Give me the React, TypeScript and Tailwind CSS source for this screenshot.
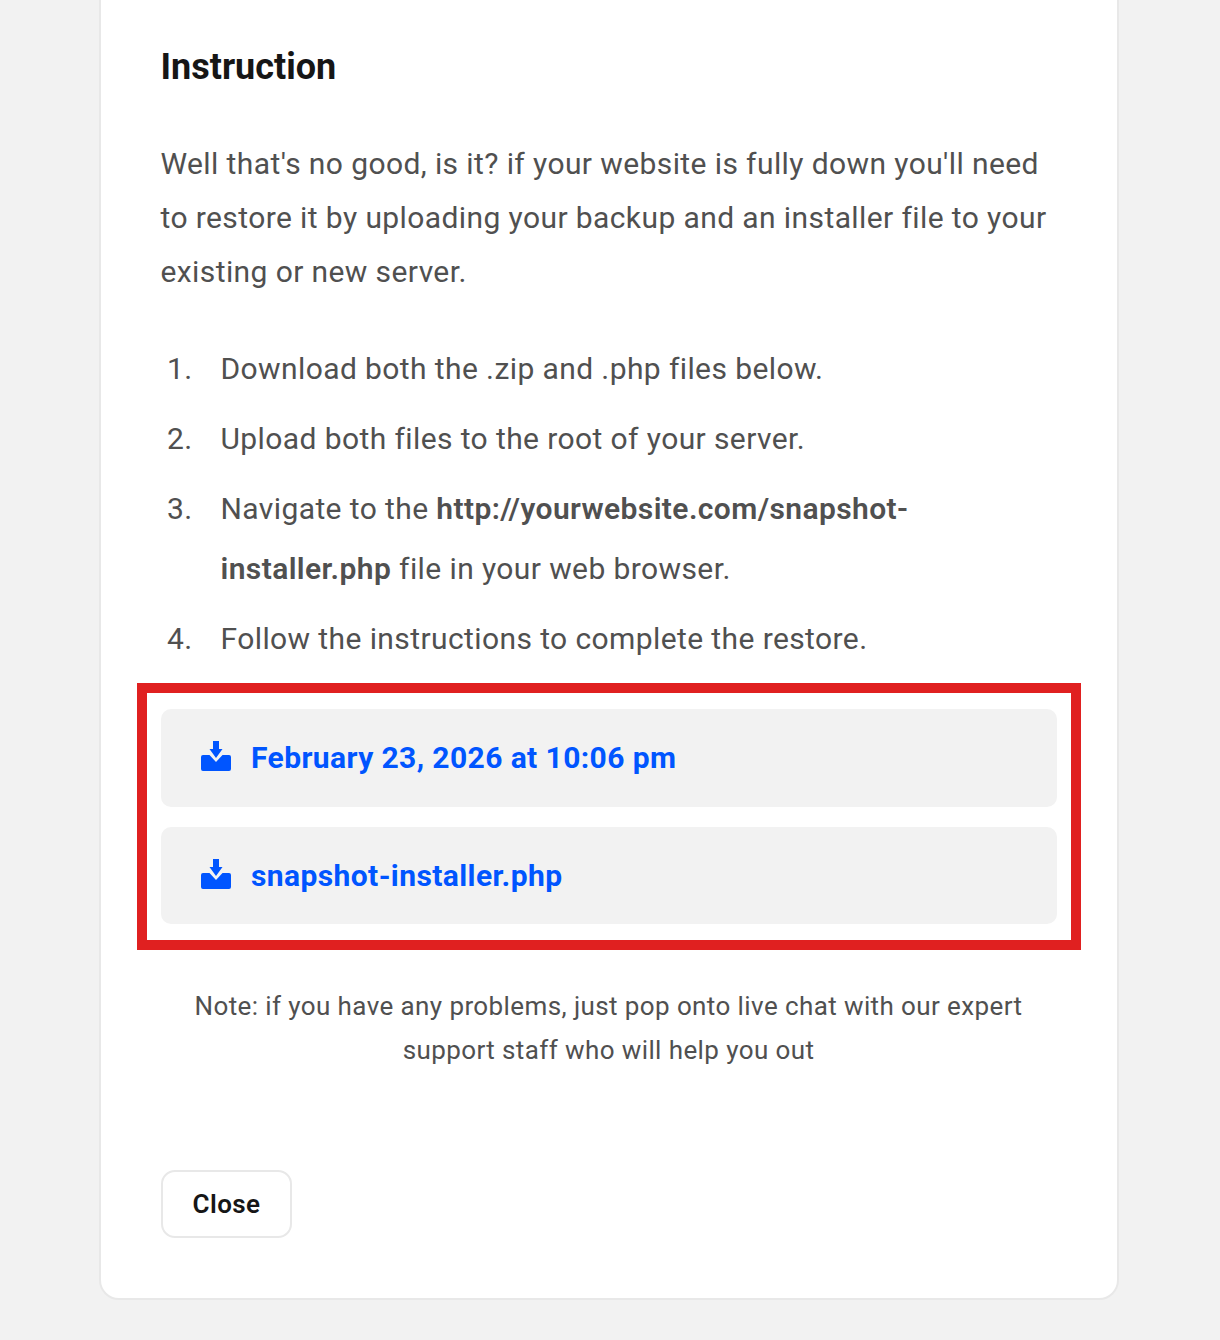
export default function App() {
  const steps = [
    <>Download both the .zip and .php files below.</>,
    <>Upload both files to the root of your server.</>,
    <>
      Navigate to the <strong className="font-semibold">http://yourwebsite.com/snapshot-installer.php</strong> file in your web browser.
    </>,
    <>Follow the instructions to complete the restore.</>,
  ];

  return (
    <div className="h-[1340px] overflow-hidden bg-[#f2f2f2] font-['Roboto',sans-serif] tracking-[0.4px]">
      <div className="ml-[98.500px] w-[1020px] -mt-[20px] h-[1320px] rounded-[20px] border-2 border-[#e8e8e8] bg-white px-[60px] pt-[60px]">
        <h2 className="text-[36px] leading-[50px] font-bold tracking-normal text-[#161616]">Instruction</h2>

        {/* Intro */}
        <p className="mt-[45px] text-[30px] leading-[54px] text-[#505050]">
          Well that's no good, is it? if your website is fully down you'll need to restore it by uploading your backup and an installer file to your existing or new server.
        </p>

        {/* Steps */}
        <ol className="mt-[40px] flex flex-col gap-[10px] text-[#505050]">
          {steps.map((step, i) => (
            <li key={i} className="flex text-[30px] leading-[60px]">
              <span className="w-[60px] shrink-0 pl-[6.500px]">{i + 1}.</span>
              <span className="flex-1 pr-[100px]">{step}</span>
            </li>
          ))}
        </ol>

        {/* Downloads */}
        <div className="relative mt-[40px] flex flex-col gap-[20px]">
          <div className="absolute -inset-x-[24px] -top-[26px] -bottom-[26px] border-[10px] border-[#e02020]" />
          <DownloadRow label="February 23, 2026 at 10:06 pm" height="h-[98px] pb-[1px]" />
          <DownloadRow label="snapshot-installer.php" height="h-[97px]" />
        </div>

        <p className="mt-[60px] px-[30px] text-center text-[26px] leading-[44px] text-[#505050]">
          Note: if you have any problems, just pop onto live chat with our expert support staff who will help you out
        </p>

        <button className="mt-[98px] flex h-[68px] w-[131px] items-center justify-center rounded-[14px] border-2 border-[#e8e8e8] bg-white pl-[1px] text-[26px] font-semibold text-[#161616]">
          Close
        </button>
      </div>
    </div>
  );
}

function DownloadRow({ label, height }: { label: string; height: string }) {
  return (
    <a className={`flex items-center gap-[20.500px] rounded-[10px] bg-[#f2f2f2] pl-[40px] text-[30px] font-bold text-[#0055ff] ${height}`}>
      <svg viewBox="0 0 30 30" className="mb-[4px] h-[30px] w-[30px] shrink-0" fill="currentColor">
        <path d="M12 0h6v8h3.500L15 17 8.500 8H12z" />
        <path d="M2 14h6.500l6.500 7 6.500-7H28a2 2 0 0 1 2 2v12a2 2 0 0 1-2 2H2a2 2 0 0 1-2-2V16a2 2 0 0 1 2-2z" />
      </svg>
      {label}
    </a>
  );
}
